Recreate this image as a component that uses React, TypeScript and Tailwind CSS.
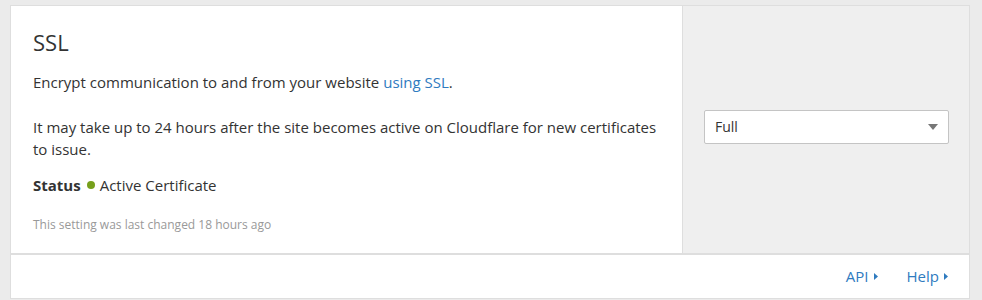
import React from "react";

export default function App() {
  return (
    <div
      className="h-[300px] w-[982px] overflow-hidden bg-[#ebebeb] pl-[10px] pr-[12px] pt-[5px]"
      style={{ fontFamily: '"Open Sans", "Noto Sans", sans-serif' }}
    >
      <div className="flex flex-col border border-[#dedede] bg-white">
        <div className="flex h-[247px]">
          <div className="flex-1 pl-[22px] pr-[20px] pt-[21px] text-[#333]">
            <h1 className="text-[22px] leading-[30px] text-[#333]">SSL</h1>
            <p className="mt-[14px] text-[15px] leading-[22px]">
              Encrypt communication to and from your website{" "}
              <a className="text-[#2f7bbf]">using SSL</a>.
            </p>
            <p className="mt-[23px] text-[15px] leading-[22px]">
              It may take up to 24 hours after the site becomes active on Cloudflare for new certificates to issue.
            </p>
            <div className="mt-[14px] flex items-center text-[15px] leading-[22px]">
              <span className="font-bold">Status</span>
              <span className="ml-[6px] mr-[5px] inline-block h-[8px] w-[8px] rounded-full bg-[#76a01c]" />
              <span>Active Certificate</span>
            </div>
            <p className="mt-[20px] text-[12px] leading-[18px] text-[#999]">
              This setting was last changed 18 hours ago
            </p>
          </div>
          <div className="flex w-[287px] items-center border-l border-[#dedede] bg-[#efefef] pb-[6px] pl-[21px] pr-[20px]">
            <div className="flex h-[34px] w-full items-center justify-between rounded-[2px] border border-[#c4c4c4] bg-white pl-[10px] pr-[10px] text-[14px] text-[#333]">
              <span>Full</span>
              <svg width="10" height="6" viewBox="0 0 10 6">
                <path d="M0 0 L10 0 L5 6 Z" fill="#777" />
              </svg>
            </div>
          </div>
        </div>
        <div className="flex h-[45px] items-center justify-end border-t-2 border-[#dedede] pr-[21px] text-[15px] text-[#2f7bbf]">
          <span className="flex items-center">
            API
            <svg className="ml-[5px]" width="4" height="7" viewBox="0 0 4 7">
              <path d="M0 0 L4 3.5 L0 7 Z" fill="#2f7bbf" />
            </svg>
          </span>
          <span className="ml-[29px] flex items-center">
            Help
            <svg className="ml-[5px]" width="4" height="7" viewBox="0 0 4 7">
              <path d="M0 0 L4 3.5 L0 7 Z" fill="#2f7bbf" />
            </svg>
          </span>
        </div>
      </div>
    </div>
  );
}
